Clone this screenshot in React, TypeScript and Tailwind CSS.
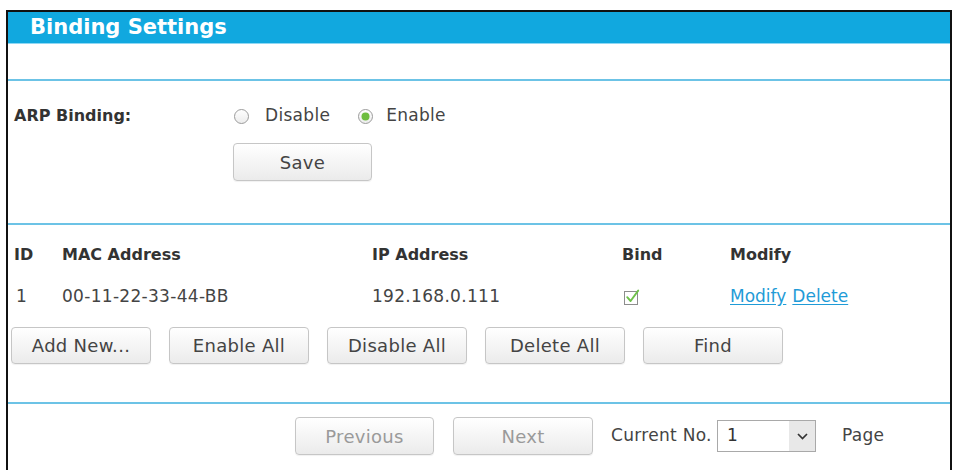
import React from "react";

function Btn({ children, disabled, w = "w-[140px]", h = "h-[37px]" }: { children: React.ReactNode; disabled?: boolean; w?: string; h?: string }) {
  return (
    <div
      className={
        "flex shrink-0 items-center justify-center rounded-[4px] border border-[#c6c6c6] bg-linear-to-b from-white to-[#ebebeb] text-[18px] shadow-[0_1px_1px_rgba(0,0,0,0.06)] " +
        w +
        " " +
        h +
        " " +
        (disabled ? "text-[#9a9a9a]" : "text-[#444]")
      }
    >
      {children}
    </div>
  );
}

function Radio({ checked }: { checked?: boolean }) {
  return (
    <svg width="17" height="17" viewBox="0 0 17 17" className="shrink-0">
      <defs>
        <linearGradient id={checked ? "rg1" : "rg0"} x1="0" y1="0" x2="0" y2="1">
          <stop offset="0" stopColor="#ffffff" />
          <stop offset="1" stopColor="#ececec" />
        </linearGradient>
      </defs>
      <circle cx="8.5" cy="8.5" r="7" fill={`url(#${checked ? "rg1" : "rg0"})`} stroke="#9c9c9c" strokeWidth="1" />
      {checked && <circle cx="8.5" cy="8.5" r="4" fill="#6dbd3f" />}
    </svg>
  );
}

function Divider() {
  return <div className="h-[2px] w-full bg-[#6cc3e6]" />;
}

export default function App() {
  return (
    <div className="h-[470px] w-[956px] overflow-hidden bg-white pl-[6px] pt-[10px] font-['DejaVu_Sans',Verdana,sans-serif] text-[17px] tracking-[0.3px] text-[#444]">
      <div className="flex h-[470px] w-[946px] flex-col border-x-2 border-t-2 border-[#111]">
        <div className="flex h-[32px] items-center border-b border-[#8fd8f4] bg-[#11a8df] pl-[22px] text-[21px] font-bold tracking-normal text-white">
          Binding Settings
        </div>
        <div className="h-[35px]" />
        <Divider />

        <div className="mt-[23px] flex h-[24px] items-center">
          <div className="w-[225px] pl-[6px] text-[16px] font-bold tracking-normal text-[#333]">ARP Binding:</div>
          <div className="flex items-center">
            <Radio />
            <span className="ml-[15px]">Disable</span>
            <span className="ml-[27px] flex items-center">
              <Radio checked />
            </span>
            <span className="ml-[12px]">Enable</span>
          </div>
        </div>
        <div className="mt-[15px] flex pl-[225px]">
          <Btn w="w-[139px]" h="h-[38px]">Save</Btn>
        </div>

        <div className="mt-[42px]">
          <Divider />
        </div>

        <div className="mt-[18px] grid h-[24px] grid-cols-[48px_310px_250px_108px_1fr] items-center pl-[6px] text-[16px] font-bold tracking-normal text-[#333]">
          <div>ID</div>
          <div>MAC Address</div>
          <div>IP Address</div>
          <div>Bind</div>
          <div>Modify</div>
        </div>
        <div className="mt-[17px] grid h-[24px] grid-cols-[48px_310px_250px_108px_1fr] items-center pl-[6px]">
          <div className="pl-[2px]">1</div>
          <div>00-11-22-33-44-BB</div>
          <div>192.168.0.111</div>
          <div className="pl-[1px]">
            <svg width="19" height="18" viewBox="0 0 19 18">
              <rect x="1.5" y="3.5" width="13" height="13" fill="#fff" stroke="#8d8d8d" strokeWidth="1" />
              <path d="M4.2 9.2 L7.6 13 L15.2 2.6" fill="none" stroke="#6fc14a" strokeWidth="1.9" strokeLinecap="round" strokeLinejoin="round" />
            </svg>
          </div>
          <div className="flex gap-[6px] tracking-normal text-[#1f9bd7]">
            <span className="underline underline-offset-2">Modify</span>
            <span className="underline underline-offset-2">Delete</span>
          </div>
        </div>

        <div className="mt-[19px] flex gap-[18px] pl-[3px]">
          <Btn>Add New...</Btn>
          <Btn>Enable All</Btn>
          <Btn>Disable All</Btn>
          <Btn>Delete All</Btn>
          <Btn>Find</Btn>
        </div>

        <div className="mt-[38px]">
          <Divider />
        </div>

        <div className="mt-[13px] flex items-center pl-[287px]">
          <div className="flex gap-[19px]">
            <Btn w="w-[139px]" h="h-[38px]" disabled>Previous</Btn>
            <Btn w="w-[140px]" h="h-[38px]" disabled>Next</Btn>
          </div>
          <span className="ml-[18px] w-[106px]">Current No.</span>
          <div className="flex h-[32px] w-[99px] items-stretch border border-[#a9a9a9] bg-white">
            <span className="flex flex-1 items-center pl-[9px] text-[#333]">1</span>
            <span className="flex w-[26px] items-center justify-center bg-[#e8e8e8]">
              <svg width="11" height="7" viewBox="0 0 11 7">
                <path d="M1 1 L5.5 5.5 L10 1" fill="none" stroke="#333" strokeWidth="1.7" />
              </svg>
            </span>
          </div>
          <span className="ml-[26px]">Page</span>
        </div>
      </div>
    </div>
  );
}
